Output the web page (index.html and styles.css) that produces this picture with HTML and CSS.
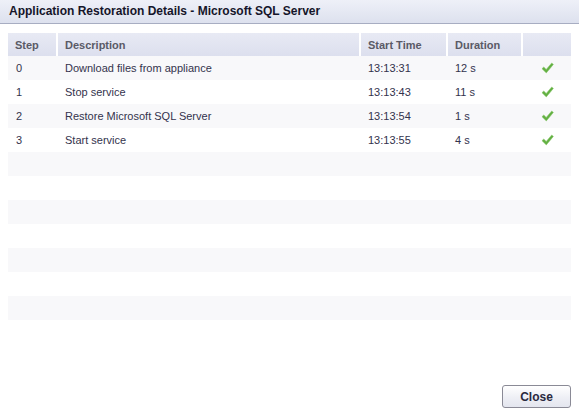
FILE: index.html
```html
<!DOCTYPE html>
<html lang="en">
<head>
    <meta charset="UTF-8">
    <title>Application Restoration Details</title>
    <link rel="stylesheet" href="styles.css">
</head>
<body>
<div class="dialog">
    <div class="titlebar">Application Restoration Details - Microsoft SQL Server</div>
    <table class="steps">
        <colgroup>
            <col class="c-step"><col class="c-desc"><col class="c-start"><col class="c-dur"><col class="c-ok">
        </colgroup>
        <tr class="head">
            <th>Step</th><th>Description</th><th>Start Time</th><th>Duration</th><th></th>
        </tr>
        <tr class="odd">
            <td>0</td><td>Download files from appliance</td><td>13:13:31</td><td>12 s</td><td class="ok"><svg width="13" height="12" viewBox="0 0 14 13"><path d="M1 7.2 L3 5.4 L5.6 8 L11.6 1 L13.4 2.6 L5.7 11.8 Z" fill="#62b042" stroke="#8cc870" stroke-width="0.6"/></svg></td>
        </tr>
        <tr>
            <td>1</td><td>Stop service</td><td>13:13:43</td><td>11 s</td><td class="ok"><svg width="13" height="12" viewBox="0 0 14 13"><path d="M1 7.2 L3 5.4 L5.6 8 L11.6 1 L13.4 2.6 L5.7 11.8 Z" fill="#62b042" stroke="#8cc870" stroke-width="0.6"/></svg></td>
        </tr>
        <tr class="odd">
            <td>2</td><td>Restore Microsoft SQL Server</td><td>13:13:54</td><td>1 s</td><td class="ok"><svg width="13" height="12" viewBox="0 0 14 13"><path d="M1 7.2 L3 5.4 L5.6 8 L11.6 1 L13.4 2.6 L5.7 11.8 Z" fill="#62b042" stroke="#8cc870" stroke-width="0.6"/></svg></td>
        </tr>
        <tr>
            <td>3</td><td>Start service</td><td>13:13:55</td><td>4 s</td><td class="ok"><svg width="13" height="12" viewBox="0 0 14 13"><path d="M1 7.2 L3 5.4 L5.6 8 L11.6 1 L13.4 2.6 L5.7 11.8 Z" fill="#62b042" stroke="#8cc870" stroke-width="0.6"/></svg></td>
        </tr>
        <tr class="odd"><td></td><td></td><td></td><td></td><td></td></tr>
        <tr><td></td><td></td><td></td><td></td><td></td></tr>
        <tr class="odd"><td></td><td></td><td></td><td></td><td></td></tr>
        <tr><td></td><td></td><td></td><td></td><td></td></tr>
        <tr class="odd"><td></td><td></td><td></td><td></td><td></td></tr>
        <tr><td></td><td></td><td></td><td></td><td></td></tr>
        <tr class="odd"><td></td><td></td><td></td><td></td><td></td></tr>
        <tr><td></td><td></td><td></td><td></td><td></td></tr>
    </table>
    <div class="footer">
        <button class="btn">Close</button>
    </div>
</div>
</body>
</html>
```

FILE: styles.css
```css
html, body{
    margin: 0;
    padding: 0;
    background: #ffffff;
}
body{
    font-family: "Liberation Sans", Arial, sans-serif;
    font-size: 11px;
    color: #33334d;
}
.dialog{
    width: 579px;
    height: 416px;
    display: flex;
    flex-direction: column;
}
.titlebar{
    height: 23px;
    line-height: 23px;
    padding-left: 9px;
    font-size: 12px;
    font-weight: bold;
    color: #15152a;
    background: linear-gradient(#eef0f8, #dde1ee);
    border-bottom: 1px solid #a7adc2;
}
.steps{
    margin: 9px 0 0 8px;
    width: 563px;
    border-collapse: collapse;
    table-layout: fixed;
}
.c-step{ width: 49px; }
.c-desc{ width: 303px; }
.c-start{ width: 87px; }
.c-dur{ width: 75px; }
.c-ok{ width: 49px; }
.head th{
    height: 23px;
    padding: 0 0 0 7px;
    text-align: left;
    font-weight: bold;
    color: #5a5a66;
    background: linear-gradient(#e8eaf4, #dcdfee);
    border-left: 2px solid #ffffff;
}
.head th:first-child{
    border-left: none;
}
.steps td{
    height: 24px;
    padding: 0 0 0 8px;
    white-space: nowrap;
}
.steps tr.odd td{
    background: #f8f8fa;
}
.steps td.ok{
    padding: 0 0 0 19px;
}
.steps td.ok svg{
    display: block;
}
.footer{
    margin-top: auto;
    display: flex;
    justify-content: flex-end;
    padding: 0 8px 8px 0;
}
.btn{
    width: 69px;
    height: 23px;
    border: 1px solid #8a8a96;
    border-radius: 3px;
    background: linear-gradient(#ffffff, #eeeff5 55%, #e4e6ef);
    font-family: "Liberation Sans", Arial, sans-serif;
    font-size: 12px;
    font-weight: bold;
    color: #2a2a40;
}
```
